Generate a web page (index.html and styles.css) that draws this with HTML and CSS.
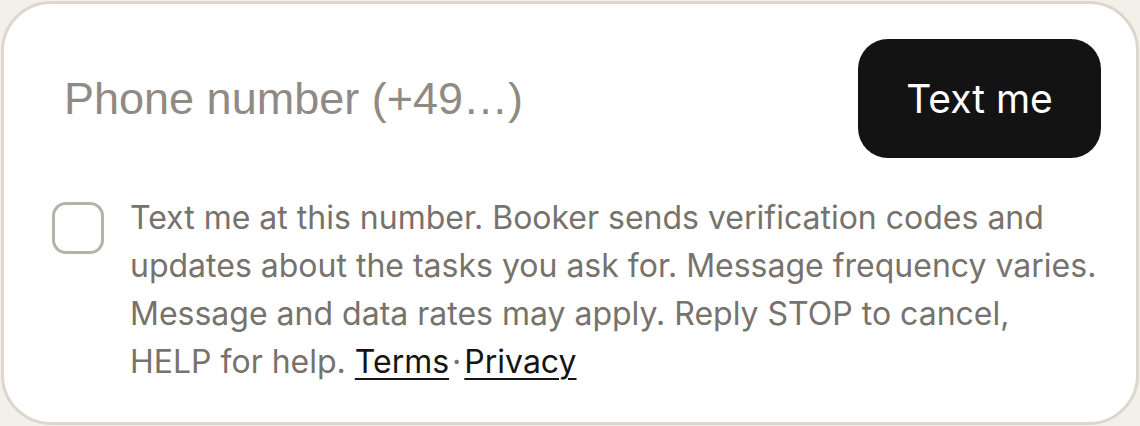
FILE: index.html
```html
<!DOCTYPE html>
<html lang="en">
<head>
  <meta charset="UTF-8">
  <meta name="viewport" content="width=device-width, initial-scale=1.0">
  <title>Text me</title>
  <link rel="stylesheet" href="styles.css">
</head>
<body>
  <div class="card">
    <div class="phone-row">
      <input type="tel" class="phone-input" placeholder="Phone number (+49…)" autocomplete="off">
      <button type="button" class="send-btn">Text me</button>
    </div>

    <label class="consent">
      <input type="checkbox" class="consent-box">
      <span class="consent-text">Text me at this number. Booker sends verification codes and updates about the tasks you ask for. Message frequency varies. Message and data rates may apply. Reply STOP to cancel,<br>HELP for help. <a href="#">Terms</a><span class="dot">·</span><a href="#">Privacy</a></span>
    </label>
  </div>
</body>
</html>
```

FILE: styles.css
```css
html, body {
  margin: 0;
  height: 100%;
}

body {
  background-color: #f3f0e9;
  font-family: Inter, 'Noto Sans', sans-serif;
  padding: 1px;
  box-sizing: border-box;
}

.card {
  background-color: white;
  border: 3px solid #dbd7cd;
  border-radius: 50px;
  height: 100%;
  box-sizing: border-box;
  padding: 35px 35px 0 48px;
}

.phone-row {
  display: flex;
  align-items: center;
  gap: 20px;
}

.phone-input {
  flex: 1;
  min-width: 0;
  border: none;
  outline: none;
  background: none;
  padding: 0 0 0 12px;
  font-family: 'Liberation Sans', Arial, sans-serif;
  font-size: 45px;
  color: #333;
}

.phone-input::placeholder {
  color: #8f8a83;
}

.send-btn {
  width: 243px;
  height: 119px;
  border: none;
  border-radius: 30px;
  background-color: #131314;
  color: white;
  font-family: Inter, sans-serif;
  font-size: 39px;
  cursor: pointer;
}

.consent {
  display: flex;
  align-items: flex-start;
  gap: 26px;
  margin-top: 36px;
}

.consent-box {
  appearance: none;
  flex: none;
  width: 52px;
  height: 52px;
  margin: 8px 0 0 0;
  border: 3px solid #b7b2a9;
  border-radius: 14px;
  box-sizing: border-box;
  background: white;
}

.consent-text {
  font-size: 32px;
  line-height: 48px;
  color: #77726c;
}

.consent-text a {
  color: #151515;
  text-decoration: underline;
  text-decoration-thickness: 2px;
  text-underline-offset: 5px;
}

.dot {
  margin: 0 3px;
}
```
